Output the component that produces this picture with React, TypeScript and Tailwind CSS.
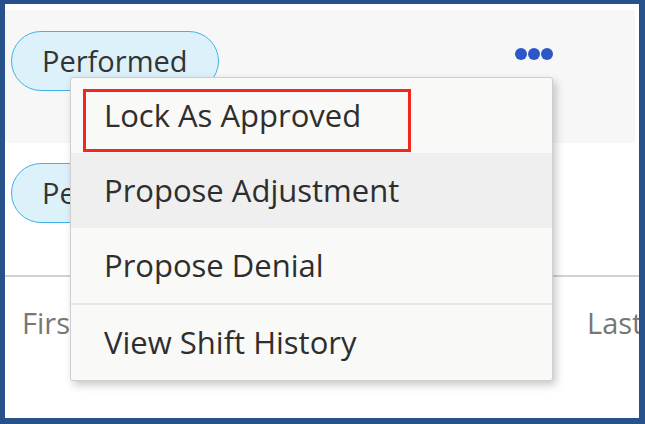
import { Fragment } from 'react';

const items = ['Lock As Approved', 'Propose Adjustment', 'Propose Denial', 'View Shift History'];

export default function App() {
  return (
    <div
      className="relative h-[424px] w-[645px] overflow-hidden border-t-[4px] border-r-[6px] border-b-[6px] border-l-[5px] border-[#26518a] bg-white"
      style={{ fontFamily: '"Open Sans", "Noto Sans", sans-serif' }}
    >
      {/* top row */}
      <div className="mt-[6px] mr-[4px] flex h-[133px] items-start justify-between bg-[#f7f7f7] pr-[82px] pl-[6px] pt-[21px]">
        <div className="flex h-[60px] w-[208px] items-center rounded-full border-[1.5px] border-[#3fb3ea] bg-[#ddf1fb] pl-[30px] text-[29px] text-[#333]">
          Performed
        </div>
        <div className="mt-[17px] flex gap-[1px]">
          <span className="h-[12px] w-[12px] rounded-full bg-[#2c57c9]" />
          <span className="h-[12px] w-[12px] rounded-full bg-[#2c57c9]" />
          <span className="h-[12px] w-[12px] rounded-full bg-[#2c57c9]" />
        </div>
      </div>

      {/* second row */}
      <div className="h-[134px] border-b-[2px] border-[#d2d2d2] pl-[6px] pt-[20px]">
        <div className="flex h-[60px] w-[208px] items-center rounded-full border-[1.5px] border-[#3fb3ea] bg-[#ddf1fb] pl-[30px] text-[29px] text-[#333]">
          Performed
        </div>
      </div>

      {/* header labels */}
      <div className="flex pt-[24px] pl-[17px] text-[29px] whitespace-nowrap text-[#777]">
        <span className="w-[565px] shrink-0">First Name</span>
        <span className="shrink-0">Last Name</span>
      </div>

      {/* dropdown menu */}
      <div className="absolute top-[73px] left-[65px] w-[483px] overflow-hidden rounded-[3px] border border-[#cfcfcf] bg-[#f9f9f8] shadow-[3px_4px_8px_rgba(0,0,0,0.22)]">
        {items.map((label, i) => (
          <Fragment key={label}>
            {i === 3 && <div className="h-[2px] bg-[#e6e6e6]" />}
            <div
              className={
                'relative flex h-[75px] items-center pl-[33px] text-[31px] whitespace-nowrap text-[#2e2e2e] ' +
                (i === 1 ? 'bg-[#efefef]' : '')
              }
            >
              {label}
              {i === 0 && (
                <div className="absolute top-[11px] left-[12px] h-[63px] w-[328px] border-[3px] border-[#f2281e]" />
              )}
            </div>
          </Fragment>
        ))}
      </div>
    </div>
  );
}
